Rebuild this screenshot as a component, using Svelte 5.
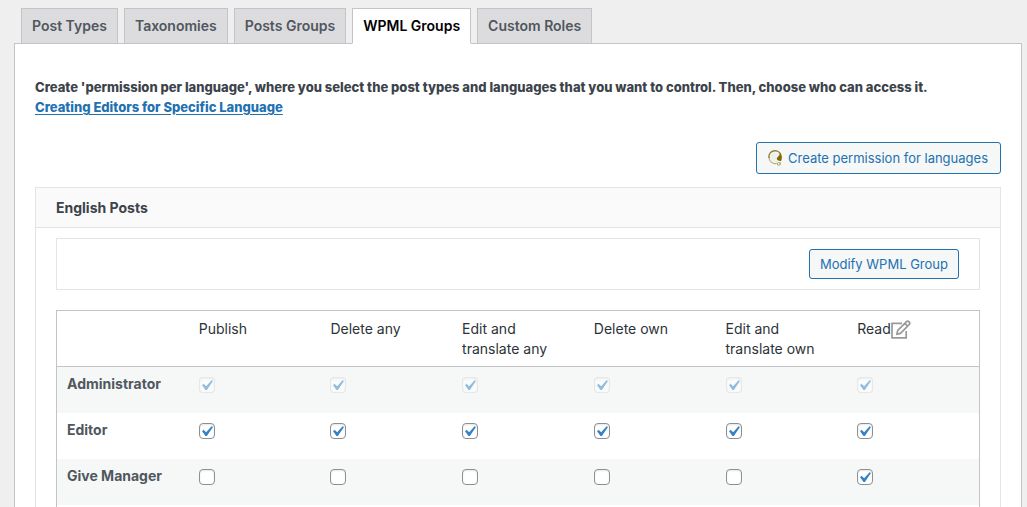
<script>
	const tabs = [
		"Post Types",
		"Taxonomies",
		"Posts Groups",
		"WPML Groups",
		"Custom Roles",
	];
	let current = $state("WPML Groups");

	const caps = [
		"Publish",
		"Delete any",
		"Edit and translate any",
		"Delete own",
		"Edit and translate own",
		"Read",
	];

	let roles = $state([
		{
			name: "Administrator",
			locked: true,
			checked: [true, true, true, true, true, true],
		},
		{
			name: "Editor",
			locked: false,
			checked: [true, true, true, true, true, true],
		},
		{
			name: "Give Manager",
			locked: false,
			checked: [false, false, false, false, false, true],
		},
	]);
</script>

<div class="page">
	<nav class="tabs">
		{#each tabs as tab}
			<button
				type="button"
				class="tab"
				class:active={tab === current}
				onclick={() => (current = tab)}>{tab}</button
			>
		{/each}
	</nav>

	<main class="panel">
		<p class="intro">
			Create 'permission per language', where you select the post types and
			languages that you want to control. Then, choose who can access it.<br />
			<a href="#editors">Creating Editors for Specific Language</a>
		</p>

		<div class="actions">
			<button type="button" class="button large">
				<svg width="16" height="16" viewBox="0 0 16 16">
					<circle cx="7" cy="7.5" r="5" fill="#edf3ec" />
					<path
						d="M8.6 13.4A6.2 6.2 0 0 1 1 7"
						fill="none"
						stroke="#b8ac70"
						stroke-width="1.1"
					/>
					<path
						d="M1 8A6.2 6.2 0 0 1 12.8 4.5"
						fill="none"
						stroke="#978332"
						stroke-width="1.5"
					/>
					<path
						d="M11.8 3C14.2 4.6 14.6 8.6 12.8 11.2C11.8 10.8 9 10.8 8.9 8.8C8.9 6.6 11.6 7 11.8 3Z"
						fill="#806b00"
					/>
					<circle
						cx="10.7"
						cy="13.9"
						r="1.4"
						fill="none"
						stroke="#a8964a"
						stroke-width="0.9"
					/>
					<path d="M12 13l1-.8v3z" fill="#a8964a" />
				</svg>
				Create permission for languages
			</button>
		</div>

		<section class="group">
			<h3>English Posts</h3>
			<div class="group-body">
				<div class="toolbar">
					<button type="button" class="button">Modify WPML Group</button>
				</div>

				<div class="table-box">
					<table>
						<thead>
							<tr>
								<td></td>
								{#each caps as cap}
									<th scope="col">
										{cap}{#if cap === "Read"}<button
												type="button"
												class="edit"
												aria-label={cap}
											>
												<svg
													width="20"
													height="20"
													viewBox="0 0 20 20"
													fill="none"
													stroke="#999"
													stroke-width="1.7"
												>
													<path d="M11 3.4H1V17.8H15.2V11" />
													<path
														d="M6.6 10.6L15.5 1.7Q16.8 .6 18.1 1.9T18.3 4.5L9.4 13.4L5.9 14.1ZM13.9 3.4L16.6 6.1"
													/>
												</svg></button
											>{/if}
									</th>
								{/each}
							</tr>
						</thead>
						<tbody>
							{#each roles as role}
								<tr>
									<th scope="row">{role.name}</th>
									{#each caps as cap, i}
										<td>
											<input
												type="checkbox"
												aria-label="{role.name}: {cap}"
												disabled={role.locked}
												bind:checked={role.checked[i]}
											/>
										</td>
									{/each}
								</tr>
							{/each}
						</tbody>
					</table>
				</div>
			</div>
		</section>
	</main>
</div>

<style>
	:global(body) {
		margin: 0;
		background: #efefef;
	}

	.page {
		box-sizing: border-box;
		height: 100vh;
		overflow: hidden;
		padding: 8px 5px 0 14px;
		font-family: Inter, "Liberation Sans", sans-serif;
		font-size: 13px;
		line-height: 20px;
		color: #3c434a;
	}

	button {
		font-family: inherit;
		cursor: pointer;
	}

	.tabs {
		display: flex;
		gap: 6px;
		padding-left: 7px;
	}

	.tab {
		height: 36px;
		margin-bottom: -1px;
		padding: 0 10px;
		border: 1px solid #c3c4c7;
		background: #dcdcde;
		color: #50575e;
		font-size: 14px;
		font-weight: 600;
		line-height: 24px;
		white-space: nowrap;
	}

	.tab.active {
		position: relative;
		border-bottom-color: #fff;
		background: #fff;
		color: #000;
	}

	.panel {
		padding: 33px 20px 20px;
		border: 1px solid #c3c4c7;
		background: #fff;
	}

	.intro {
		margin: 0;
		font-weight: 800;
	}

	.intro a {
		color: #2271b1;
		text-underline-offset: 2px;
	}

	.actions {
		display: flex;
		justify-content: flex-end;
		margin: 25px 0 13px;
	}

	.button {
		display: flex;
		align-items: center;
		gap: 4px;
		height: 30px;
		padding: 0 10px;
		border: 1px solid #2271b1;
		border-radius: 3px;
		background: #f6f7f7;
		color: #2271b1;
		font-size: 13px;
		font-weight: 400;
		white-space: nowrap;
	}

	.button.large {
		height: 32px;
		padding: 0 12px 0 11px;
	}

	.group {
		border: 1px solid #e2e4e7;
	}

	h3 {
		margin: 0;
		padding: 10px 20px 9px;
		border-bottom: 1px solid #e2e4e7;
		background: #fafafa;
		font-size: 14px;
		font-weight: 700;
	}

	.group-body {
		padding: 10px 20px 20px;
	}

	.toolbar {
		display: flex;
		justify-content: flex-end;
		margin-bottom: 20px;
		padding: 10px 20px;
		border: 1px solid #e2e4e7;
	}

	.table-box {
		padding-bottom: 40px;
		border: 1px solid #c3c4c7;
	}

	table {
		width: 100%;
		border-collapse: separate;
		border-spacing: 0;
		table-layout: fixed;
		font-size: 14px;
	}

	th,
	td {
		padding: 8px 10px;
		text-align: left;
		vertical-align: top;
	}

	thead th,
	thead td {
		padding: 8px 10px 7px;
		border-bottom: 1px solid #c3c4c7;
		color: #2c3338;
		font-weight: 400;
	}

	tbody th,
	tbody td {
		box-sizing: border-box;
		height: 46px;
	}

	tbody th {
		padding-top: 7px;
		color: #50575e;
		font-weight: 700;
		white-space: nowrap;
	}

	tbody tr:nth-child(odd) {
		background: #f6f7f7;
	}

	.edit {
		padding: 1px 0 0;
		border: 0;
		background: none;
		vertical-align: top;
	}

	.edit svg {
		display: block;
	}

	input {
		appearance: none;
		display: block;
		width: 16px;
		height: 16px;
		margin: 2px 0 0;
		border: 1px solid #8c8f94;
		border-radius: 4px;
		background: #fff;
		box-shadow: inset 0 1px 2px rgba(0, 0, 0, 0.1);
	}

	input:checked {
		background: #fff
			url("data:image/svg+xml,%3Csvg xmlns='http://www.w3.org/2000/svg' viewBox='0 0 20 20'%3E%3Cpath d='M14.83 4.89l1.34.94-5.81 8.38H9.02L5.78 9.67l1.34-1.25 2.57 2.4z' fill='%233582c4'/%3E%3C/svg%3E")
			-4px -3px / 21px 21px no-repeat;
	}

	input:disabled {
		border-color: rgba(140, 143, 148, 0.35);
		opacity: 0.5;
	}
</style>
